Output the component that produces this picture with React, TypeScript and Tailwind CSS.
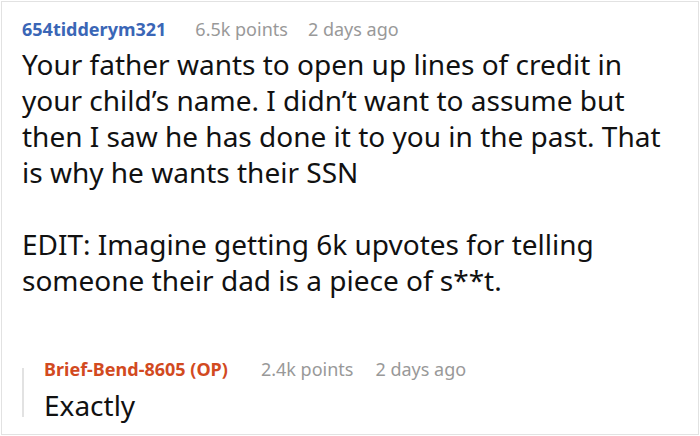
import React from "react";

export default function App() {
  return (
    <div className="w-[700px] h-[436px] bg-white" style={{ fontFamily: '"Noto Sans", sans-serif' }}>
      <div className="ml-[1px] mt-[1px] w-[698px] h-[434px] border border-[#e2e2e2] box-border pl-[20px] pr-[10px] pt-[15px]">
        <div className="flex items-baseline text-[18px] leading-[24px]">
          <span className="font-bold text-[#3a66b6]">654tidderym321</span>
          <span className="ml-[29px] text-[#999999]">6.5k points</span>
          <span className="ml-[20px] text-[#999999]">2 days ago</span>
        </div>
        <div className="mt-[5px] text-[28px] leading-[36px] text-[#111111]">
          <p>Your father wants to open up lines of credit in your child’s name. I didn’t want to assume but then I saw he has done it to you in the past. That is why he wants their SSN</p>
          <p className="mt-[36px]">EDIT: Imagine getting 6k upvotes for telling someone their dad is a piece of s**t.</p>
        </div>
        <div className="mt-[59px] flex">
          <div className="w-[2px] bg-[#e2e2e2] mt-[11px] mb-[6px]" />
          <div className="pl-[20px]">
            <div className="flex items-baseline text-[18px] leading-[24px]">
              <span className="font-bold text-[#d24a1f]">Brief-Bend-8605 (OP)</span>
              <span className="ml-[33px] text-[#999999]">2.4k points</span>
              <span className="ml-[22px] text-[#999999]">2 days ago</span>
            </div>
            <div className="mt-[6px] text-[28px] leading-[36px] text-[#111111]">Exactly</div>
          </div>
        </div>
      </div>
    </div>
  );
}
